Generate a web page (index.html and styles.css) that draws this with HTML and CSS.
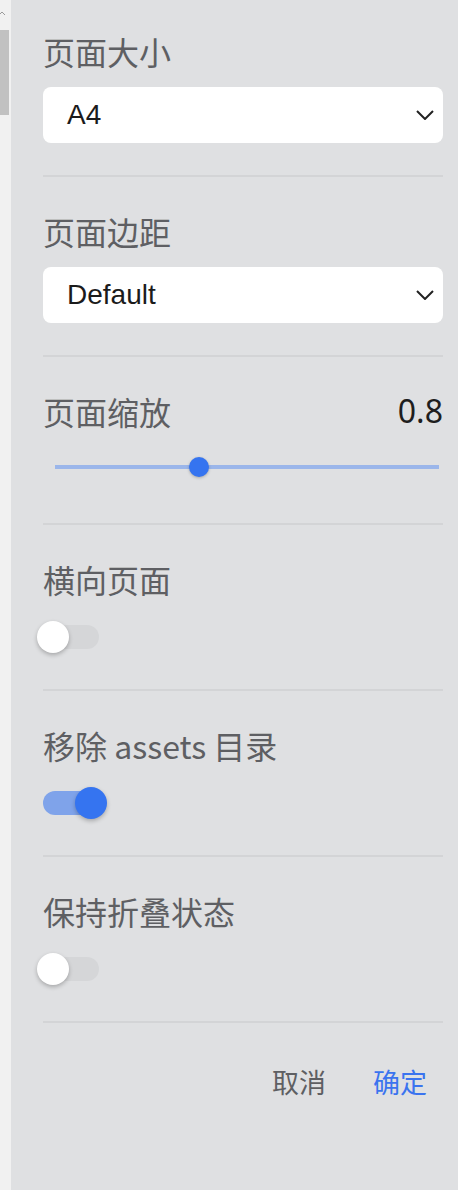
FILE: index.html
```html
<!DOCTYPE html>
<html lang="zh">
<head>
<meta charset="utf-8">
<title>Export settings</title>
<link rel="stylesheet" href="styles.css">
</head>
<body>
<div class="page">
  <div class="gutter">
    <svg class="gutter-arrow" width="6" height="6" viewBox="0 0 6 6"><path d="M-1 5 L2 2 L5 5" fill="none" stroke="#9a9a9a" stroke-width="1"/></svg>
    <div class="gutter-thumb"></div>
  </div>
  <div class="panel">
    <div class="section first">
      <div class="label">页面大小</div>
      <div class="select"><span>A4</span>
        <svg class="chev" width="18" height="10" viewBox="0 0 18 10"><path d="M1 1 L9 9 L17 1" fill="none" stroke="#222" stroke-width="2"/></svg>
      </div>
    </div>
    <div class="section">
      <div class="label">页面边距</div>
      <div class="select"><span>Default</span>
        <svg class="chev" width="18" height="10" viewBox="0 0 18 10"><path d="M1 1 L9 9 L17 1" fill="none" stroke="#222" stroke-width="2"/></svg>
      </div>
    </div>
    <div class="section slider-section">
      <div class="label-row"><span class="label">页面缩放</span><span class="value">0.8</span></div>
      <div class="slider">
        <div class="track"></div>
        <div class="thumb" style="left: 37.5%"></div>
      </div>
    </div>
    <div class="section toggle-section">
      <div class="label">横向页面</div>
      <div class="switch"><div class="switch-track"></div><div class="switch-knob"></div></div>
    </div>
    <div class="section toggle-section">
      <div class="label">移除 assets 目录</div>
      <div class="switch on"><div class="switch-track"></div><div class="switch-knob"></div></div>
    </div>
    <div class="section toggle-section">
      <div class="label">保持折叠状态</div>
      <div class="switch"><div class="switch-track"></div><div class="switch-knob"></div></div>
    </div>
    <div class="actions">
      <button class="btn">取消</button>
      <button class="btn primary">确定</button>
    </div>
  </div>
</div>
</body>
</html>
```

FILE: styles.css
```css
html, body {
  margin: 0;
  padding: 0;
  height: 100%;
}
body {
  font-family: "Noto Sans CJK SC", "Noto Sans", sans-serif;
  background: #dfe0e2;
}
.page {
  display: flex;
  min-height: 1190px;
}
.gutter {
  width: 11px;
  flex: 0 0 11px;
  background: #f1f1f1;
  position: relative;
}
.gutter-arrow {
  position: absolute;
  left: 0;
  top: 10px;
}
.gutter-thumb {
  position: absolute;
  left: 0;
  top: 30px;
  width: 9px;
  height: 85px;
  background: #c1c1c1;
}
.panel {
  flex: 1;
  background: #dfe0e2;
  padding: 0 15px 0 32px;
}
.section {
  padding: 32px 0 32px;
  border-bottom: 2px solid #d3d4d6;
}
.section.first {
  padding-top: 29px;
}
.label {
  font-size: 32px;
  line-height: 44px;
  color: #5e5f63;
}
.select {
  margin-top: 14px;
  height: 56px;
  background: #ffffff;
  border-radius: 8px;
  display: flex;
  align-items: center;
  justify-content: space-between;
  padding: 0 9px 0 24px;
}
.select span {
  font-family: "Liberation Sans", Arial, sans-serif;
  font-size: 28px;
  color: #1b1b1b;
}
.chev {
  display: block;
}
.slider-section {
  padding-bottom: 46px;
}
.label-row {
  display: flex;
  justify-content: space-between;
  align-items: center;
}
.value {
  font-family: "Noto Sans", sans-serif;
  font-size: 32px;
  line-height: 44px;
  color: #1e1e1e;
}
.slider {
  margin: 24px 4px 0 12px;
  height: 20px;
  position: relative;
}
.track {
  position: absolute;
  left: 0;
  right: 0;
  top: 8px;
  height: 4px;
  background: #9bb6ea;
}
.thumb {
  position: absolute;
  top: 0;
  width: 20px;
  height: 20px;
  margin-left: -10px;
  border-radius: 50%;
  background: #3574f0;
  box-shadow: 0 1px 3px rgba(0, 0, 0, 0.25);
}
.toggle-section {
  padding-bottom: 36px;
}
.switch {
  margin-top: 20px;
  position: relative;
  width: 56px;
  height: 32px;
}
.switch-track {
  position: absolute;
  left: 0;
  top: 4px;
  width: 56px;
  height: 24px;
  border-radius: 12px;
  background: #d5d6d8;
}
.switch-knob {
  position: absolute;
  left: -6px;
  top: 0;
  width: 32px;
  height: 32px;
  border-radius: 50%;
  background: #ffffff;
  box-shadow: 0 2px 4px rgba(0, 0, 0, 0.25);
}
.switch.on .switch-track {
  background: #7fa3ea;
}
.switch.on .switch-knob {
  left: 32px;
  background: #3574f0;
}
.actions {
  display: flex;
  justify-content: flex-end;
  gap: 15px;
  margin-top: 39px;
}
.btn {
  border: none;
  background: transparent;
  font-family: "Noto Sans CJK SC", sans-serif;
  font-size: 27px;
  line-height: 40px;
  padding: 0 16px;
  color: #5e5f63;
  cursor: pointer;
}
.btn.primary {
  color: #3b74ef;
}
```
